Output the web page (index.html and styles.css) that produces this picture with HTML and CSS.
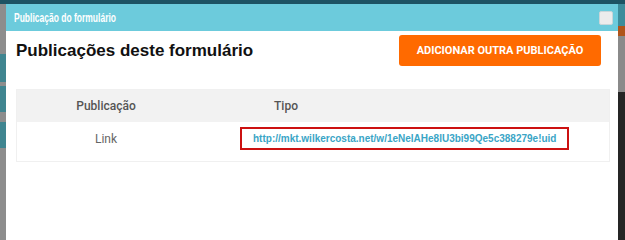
FILE: index.html
```html
<!DOCTYPE html>
<html>
  <head>
    <title>Publicação do formulário</title>
    <meta charset="utf-8" />
    <link rel="stylesheet" href="styles.css">
  </head>
  <body>
    <div class="page">
      <div class="sideLeft"></div>
      <div class="modal">
        <div class="modal-title">
          <span class="titleText">Publicação do formulário</span>
          <span class="closeBox"></span>
        </div>
        <div class="modal-body">
          <div class="topRow">
            <h1>Publicações deste formulário</h1>
            <button class="btnAdd" type="button">Adicionar outra publicação</button>
          </div>
          <table class="pubTable">
            <thead>
              <tr>
                <th class="colPub">Publicação</th>
                <th class="colTipo">Tipo</th>
                <th></th>
              </tr>
            </thead>
            <tbody>
              <tr>
                <td class="colPub">Link</td>
                <td colspan="2" class="cellLink">
                  <a class="pubLink" href="#">http://mkt.wilkercosta.net/w/1eNelAHe8lU3bi99Qe5c388279e!uid</a>
                </td>
              </tr>
            </tbody>
          </table>
        </div>
      </div>
      <div class="sideRight"></div>
    </div>
  </body>
</html>
```

FILE: styles.css
```css
body {
  margin: 0;
  background: #1d5363;
  font-family: Roboto, "Liberation Sans", sans-serif;
  overflow: hidden;
}
.page {
  display: flex;
  height: 240px;
}
.sideLeft {
  width: 6px;
  margin-top: 4px;
  background: linear-gradient(#8d8d8d 0 50px, #3f8590 50px 78px, #8d8d8d 78px 82px, #3f8590 82px 108px, #8d8d8d 108px 118px, #3f8590 118px 144px, #8d8d8d 144px);
}
.sideRight {
  width: 7px;
  margin-top: 4px;
  background: linear-gradient(#3d8c9b 0 22px, #b0541a 22px 32px, #8a8a8a 32px 88px, #252525 88px);
}
.modal {
  flex: 1;
  margin-top: 4px;
  background: #fff;
}
.modal-title {
  height: 27px;
  background: #6ccbdc;
  color: #fff;
  display: flex;
  align-items: center;
  justify-content: space-between;
  padding: 0 5px 0 8px;
}
.titleText {
  display: inline-block;
  font-family: "Liberation Sans", Arial, sans-serif;
  font-size: 12.5px;
  font-weight: bold;
  transform: scaleX(0.68);
  transform-origin: left center;
}
.closeBox {
  width: 12px;
  height: 12px;
  background: #ececec;
  border: 1px solid #c9d6d9;
  border-radius: 2px;
}
.modal-body {
  padding: 4px 8px 0 10px;
}
.topRow {
  display: flex;
  align-items: center;
  justify-content: space-between;
  height: 31px;
}
.topRow h1 {
  margin: 0;
  font-family: "Liberation Sans", Arial, sans-serif;
  font-size: 17px;
  color: #111;
}
.btnAdd {
  background: #ff6a00;
  color: #fff;
  border: none;
  border-radius: 3px;
  height: 31px;
  width: 202px;
  margin-right: 9px;
  font-family: Roboto, sans-serif;
  font-weight: bold;
  font-size: 11px;
  text-transform: uppercase;
  cursor: pointer;
}
.pubTable {
  width: 100%;
  margin-top: 23px;
  border-collapse: collapse;
  border: 1px solid #f0f0f0;
}
.pubTable th {
  background: #f2f2f2;
  color: #555;
  font-weight: 500;
  font-size: 12px;
  height: 32px;
  padding: 0;
}
.pubTable td {
  height: 33px;
  color: #666;
  font-size: 12px;
  padding: 0 0 6px;
}
.colPub {
  width: 178px;
  text-align: center;
}
.colTipo {
  width: 182px;
  text-align: center;
}
.pubTable .cellLink {
  padding-left: 45px;
}
.pubLink {
  display: inline-block;
  border: 2px solid #cc1111;
  padding: 4px 11px;
  color: #3aa5c6;
  font-family: "Liberation Sans", Arial, sans-serif;
  font-size: 10px;
  font-weight: bold;
  text-decoration: none;
}
```
